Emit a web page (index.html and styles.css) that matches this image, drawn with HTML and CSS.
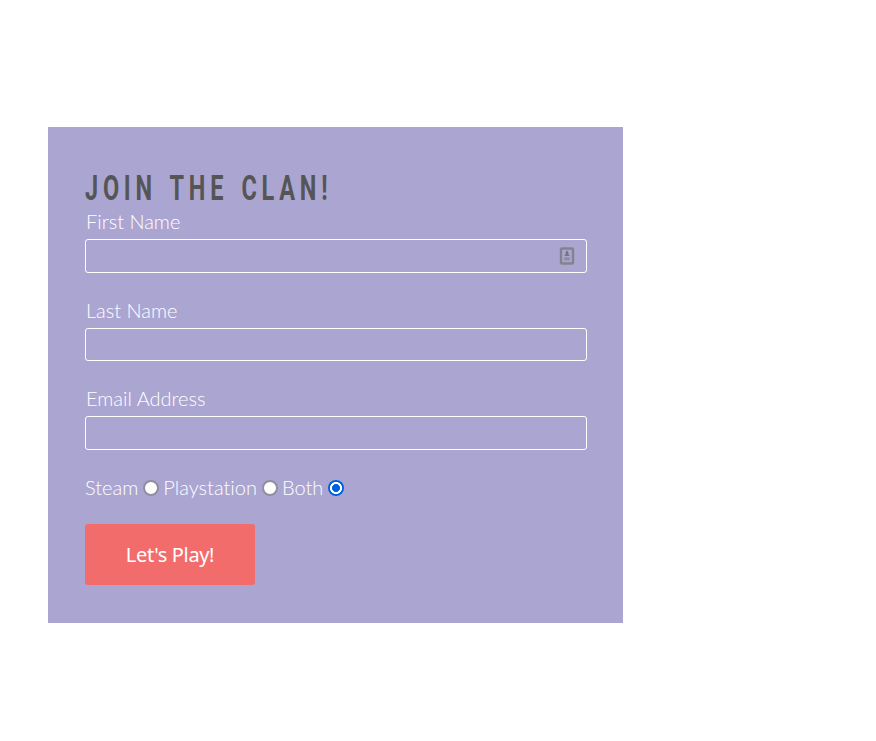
FILE: index.html
```html
<!DOCTYPE html>
<html lang="en">
<head>
<meta charset="utf-8">
<title>Join the Clan</title>
<link rel="stylesheet" href="styles.css">
</head>
<body>
<form class="signup">
  <h1 class="title">JOIN THE CLAN!</h1>
  <div class="field">
    <label class="label" for="first">First Name</label>
    <div class="control">
      <input class="input" id="first" type="text">
      <svg class="autofill" width="16" height="20" viewBox="0 0 16 20" aria-hidden="true">
        <rect x="2" y="2.5" width="12" height="15" rx="1" fill="none" stroke="#85828f" stroke-width="2.4"/>
        <path d="M8 4.3l1.4 2v1.9l1.4 1.8H5.2l1.4-1.8V6.3z" fill="#77747f"/>
        <rect x="5" y="11.2" width="6" height="3.2" rx="1" fill="#918ca3"/>
      </svg>
    </div>
  </div>
  <div class="field">
    <label class="label" for="last">Last Name</label>
    <div class="control control-short"><input class="input" id="last" type="text"></div>
  </div>
  <div class="field">
    <label class="label" for="email">Email Address</label>
    <div class="control"><input class="input" id="email" type="text"></div>
  </div>
  <div class="platforms">
    <label for="steam">Steam</label><input class="radio" id="steam" type="radio" name="platform">
    <label for="ps">Playstation</label><input class="radio" id="ps" type="radio" name="platform">
    <label for="both">Both</label><input class="radio" id="both" type="radio" name="platform" checked>
  </div>
  <button class="submit" type="button">Let's Play!</button>
</form>
</body>
</html>
```
FILE: styles.css
```css
* { box-sizing: border-box; }
body {
  margin: 0;
  background: #fff;
  color: #fff;
  font: 300 20px/24px Lato, sans-serif;
  font-variant-ligatures: none;
}
.signup {
  width: 575px;
  height: 496px;
  margin: 127px 0 0 48px;
  padding: 42px 36px 0 37px;
  background: #aba5d1;
}
.title {
  width: max-content;
  height: 40px;
  margin: 0;
  color: #555;
  font: 700 35.5px/38px Roboto, sans-serif;
  letter-spacing: 7.2px;
  word-spacing: 4px;
  white-space: nowrap;
  transform: scaleX(.662);
  transform-origin: left;
}
.field { margin-bottom: 25px; }
.label { display: block; height: 30px; padding-left: 1px; }
.control { position: relative; height: 34px; }
.control-short { height: 33px; }
.input {
  display: block;
  width: 100%;
  height: 100%;
  margin: 0;
  padding: 0 8px;
  border: 1px solid #fff;
  border-radius: 3px;
  background: transparent;
  color: #fff;
  font: inherit;
  outline: none;
}
.autofill { position: absolute; top: 7px; right: 12px; }
.platforms { display: flex; align-items: center; height: 24px; }
.radio {
  appearance: none;
  flex: none;
  width: 16px;
  height: 16px;
  margin: 2px 4px 0 5px;
  border: 2px solid #918ea0;
  border-radius: 50%;
  background: #fff;
}
.radio:checked {
  border: 0;
  background: radial-gradient(circle, #0060df 0 3.7px, #fff 4.3px 5.7px, #0060df 6.3px);
}
.submit {
  display: block;
  width: 170px;
  height: 61px;
  margin-top: 25px;
  padding: 0;
  border: 0;
  border-radius: 3px;
  background: #f36c6c;
  color: #fff;
  font: 400 20px/60px "Noto Sans", sans-serif;
  letter-spacing: -.35px;
}
```
